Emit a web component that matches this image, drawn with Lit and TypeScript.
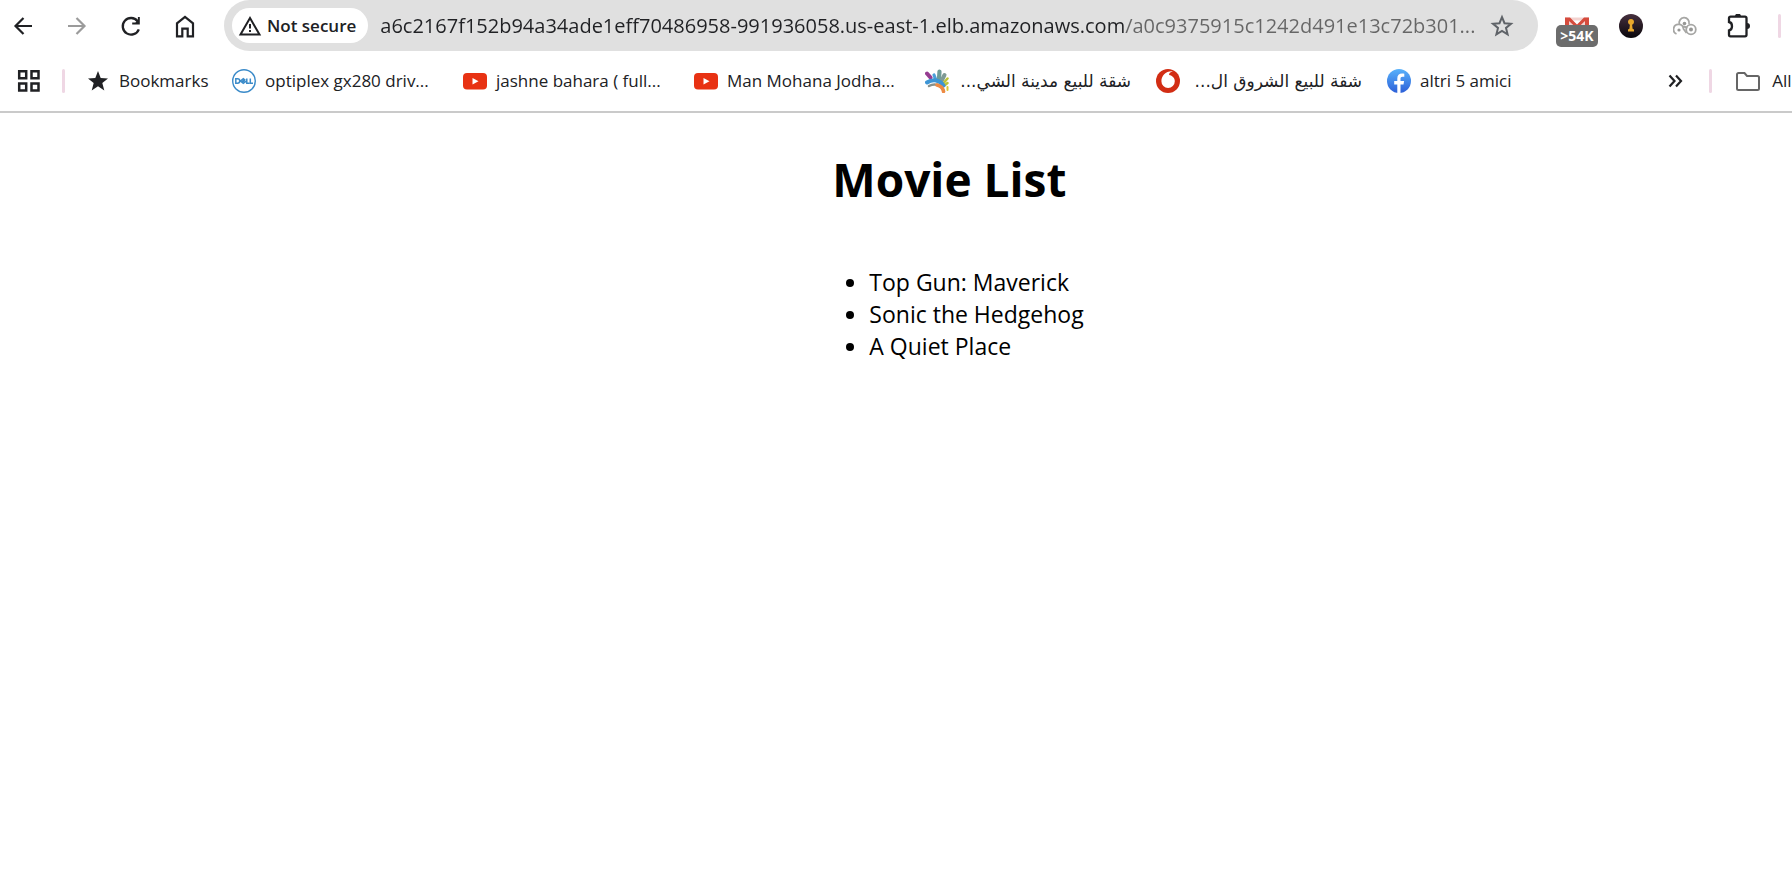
import { LitElement, html, css, svg } from "lit";
import { customElement } from "lit/decorators.js";

const line = (d: string, width = 2) =>
  svg`<path d=${d} fill="none" stroke="currentColor" stroke-width=${width} />`;

const icon = (content: unknown) =>
  html`<svg class="icon" viewBox="0 0 24 24" aria-hidden="true">${content}</svg>`;

const icons = {
  back: icon(line("M21 12H4.500M12.500 4L4.500 12l8 8", 2.2)),
  forward: icon(line("M3 12h16.500M11.500 4l8 8-8 8", 2.2)),
  reload: icon(svg`${line("M19.800 15.300A8.300 8.300 0 1 1 18.600 7.200", 2.3)}<path d="M20.800 3v7.600h-7.600v-2h3.200L18.900 6V3z" fill="currentColor"/>`),
  home: icon(line("M4 22.300V9.300L12 3l8 6.300v13h-5.300v-7.600H9.300v7.600z", 2.2)),
  warning: icon(svg`${line("M12 4L21.500 20.500h-19z", 2)}<path d="M11 10h2v4.500h-2zM11 16h2v2h-2z" fill="currentColor"/>`),
  star: icon(line("M12 3.200l2.500 6 6.500.500-5 4.200 1.600 6.400-5.600-3.400-5.600 3.400L8 13.900 3 9.700l6.500-.500z", 2)),
  gmail: icon(svg`<path d="M0 3.500h24V21H0z" fill="#f3d3d0"/><path d="M5 6.500h14L12 12z" fill="#fff"/><path d="M0 21V3.500h5l7 7 7-7h5V21h-4V7l-8 7.500L4 7v14z" fill="#d54b3d"/>`),
  lock: icon(svg`<defs><linearGradient id="night" x2="0" y2="1"><stop stop-color="#46303e"/><stop offset="1" stop-color="#09060b"/></linearGradient></defs><circle cx="12" cy="12" r="12" fill="url(#night)"/><path d="M9 17.500v-2l1.400-.800.500-4A3 3 0 1 1 13.100 10.700l.5 4 1.400.8v2z" fill="#e9a82c"/>`),
  rings: icon(svg`<g fill="none" stroke="#a6a6a4" stroke-width="1.800"><path d="M6.500 10.500a5 5 0 1 1 9.500-.500"/><path d="M3.500 20A5 5 0 1 1 10.500 15l3 4"/><circle cx="18" cy="15.500" r="4.800"/><path d="M10 12.500l4.500 1"/></g><g fill="#979795"><circle cx="11.500" cy="9.500" r="1.800"/><circle cx="6" cy="16" r="1.600"/><circle cx="18" cy="15.500" r="2"/></g>`),
  puzzle: icon(svg`${line("M3.500 2.700H18a1.500 1.500 0 0 1 1.500 1.500v16.600a1.500 1.500 0 0 1-1.500 1.500H3.500A1.500 1.500 0 0 1 2 20.800v-4.300c4-.500 4-8 0-8.500V4.200a1.500 1.500 0 0 1 1.500-1.500z", 2.3)}<path d="M8 2.500a3 3 0 0 1 6 0zM20 9a3 3 0 0 1 0 6z" fill="currentColor"/>`),
  apps: icon(line("M2.200 2.200h7v7h-7zM14.500 2.200h7v7h-7zM2.200 14.500h7v7h-7zM14.500 14.500h7v7h-7z", 2.5)),
  solidStar: icon(svg`<path d="M12 2l2.700 7 7.300.500-5.700 4.600 2 7.300L12 17.300 5.700 21.400l2-7.300L2 9.500 9.300 9z" fill="currentColor"/>`),
  dell: icon(svg`<circle cx="12" cy="12" r="11.300" fill="none" stroke="#3b8bc9" stroke-width="1.400"/><path d="M3.800 9.800v4.400h1.700c3 0 3-4.400 0-4.400zM8.300 12l3-2.200 1.300 1-2.400 1.700.5.400 2.400-1.700M8.300 12l3 2.300 3.200-2.300M14.800 9.600v4.600h2.600M18.300 9.600v4.600H21" fill="none" stroke="#3b8bc9" stroke-width="1.500"/>`),
  video: icon(svg`<rect y="4" width="24" height="16.500" rx="4" fill="#e83213"/><path d="M9.500 9v6.400l6-3.200z" fill="#fff"/>`),
  fan: icon(svg`<g fill="none" stroke-linecap="round"><path d="M2 4.500l3.500 4" stroke="#963c91" stroke-width="4"/><path d="M9 6l1.500 4" stroke="#4b9fd8" stroke-width="3.200"/><path d="M14.500 2.500l-.500 7" stroke="#6e9c98" stroke-width="4.200"/><path d="M19.500 6l-2.500 5" stroke="#7f9a95" stroke-width="4"/><path d="M22.500 9.500l-3.500 4M22.500 14l-2.500 2" stroke="#bdc436" stroke-width="2.500"/><path d="M22.500 18v3" stroke="#ddc936" stroke-width="2"/><path d="M2 13.500c6-4 13-2.500 16.500 3" stroke="#3d95d5" stroke-width="4"/><path d="M4 17c6-3.500 12-1 15 5" stroke="#87908b" stroke-width="2.500"/><path d="M12 16c4 1 6 3 6.500 6.500" stroke="#ed8a43" stroke-width="3.500"/></g>`),
  drop: icon(svg`<circle cx="12" cy="12" r="12" fill="#d22d14"/><path d="M17 2.200c-3 .800-4 2-3.900 3.700 3.500.700 5.700 3 5.700 6.300a6.700 6.700 0 0 1-13.400 0C5.400 6.500 10 1.500 17 2.200z" fill="#fff"/>`),
  social: icon(svg`<defs><linearGradient id="sky" x2="0" y2="1"><stop stop-color="#58b2fb"/><stop offset="1" stop-color="#2c5fd8"/></linearGradient></defs><circle cx="12" cy="12" r="12" fill="url(#sky)"/><path d="M10.300 24v-8.500H7.200v-3.400h3.100V9.500c0-3.300 1.800-4.900 4.700-4.900.9 0 1.700.1 2.300.2v2.900h-1.700c-1.600 0-2.100.8-2.100 2v2.400h3.600l-.6 3.400h-3V24z" fill="#fff"/>`),
  more: icon(line("M5.500 6.500l5 5.500-5 5.500M12 6.500l5 5.500-5 5.500", 2.2)),
  folder: icon(line("M2.500 4H8.500l2.500 3h10.500a1.500 1.500 0 0 1 1.500 1.500v11a1.500 1.500 0 0 1-1.500 1.500h-19A1.500 1.500 0 0 1 1 19.500v-14A1.500 1.500 0 0 1 2.500 4z", 2)),
};

const bookmarks = [
  { mark: icons.solidStar, label: "Bookmarks" },
  { mark: icons.dell, label: "optiplex gx280 driv..." },
  { mark: icons.video, label: "jashne bahara ( full..." },
  { mark: icons.video, label: "Man Mohana Jodha..." },
  { mark: icons.fan, label: "شقة للبيع مدينة الشي...", rtl: true },
  { mark: icons.drop, label: "شقة للبيع الشروق ال...", rtl: true },
  { mark: icons.social, label: "altri 5 amici" },
];

const movies = ["Top Gun: Maverick", "Sonic the Hedgehog", "A Quiet Place"];

@customElement("browser-toolbar")
export class BrowserToolbar extends LitElement {
  static styles = css`
    :host {
      display: flex;
      align-items: center;
      height: 51px;
      padding: 0 11px;
      color: #202124;
    }
    button {
      display: block;
      padding: 0;
      border: 0;
      background: none;
      color: inherit;
      font: inherit;
    }
    .icon {
      display: block;
      width: 24px;
      height: 24px;
    }
    .group {
      display: flex;
      align-items: center;
      gap: 30px;
    }
    .muted {
      color: #9b9b9b;
    }
    .omnibox {
      flex: 1;
      min-width: 0;
      box-sizing: border-box;
      height: 51px;
      margin: 0 27px;
      padding: 0 24px 0 8px;
      display: flex;
      align-items: center;
      gap: 12px;
      border-radius: 26px;
      background: #e0e0e0;
    }
    .chip {
      display: flex;
      align-items: center;
      gap: 5px;
      height: 35px;
      padding: 0 12px 0 6px;
      border-radius: 18px;
      background: #fff;
      font-size: 17px;
      font-weight: 600;
      white-space: nowrap;
    }
    .url {
      flex: 1;
      min-width: 0;
      padding: 0;
      border: 0;
      outline: 0;
      font: inherit;
      font-size: 20px;
      color: transparent;
      background: linear-gradient(90deg, #202124 745px, #666 745px);
      -webkit-background-clip: text;
      background-clip: text;
    }
    .star {
      color: #5f6368;
    }
    .mail {
      position: relative;
    }
    .badge {
      position: absolute;
      left: -9px;
      top: 11px;
      width: 42px;
      height: 22px;
      border-radius: 5px;
      background: #6c6c6c;
      color: #fff;
      font-size: 14px;
      font-weight: 700;
      line-height: 22px;
      text-align: center;
    }
    .rule {
      width: 3px;
      height: 24px;
      border-radius: 2px;
      background: #efd7e4;
    }
    .edge {
      padding-left: 27px;
    }
  `;

  render() {
    return html`
      <nav class="group" aria-label="Navigation">
        <button aria-label="Back">${icons.back}</button>
        <button class="muted" aria-label="Forward">${icons.forward}</button>
        <button aria-label="Reload">${icons.reload}</button>
        <button aria-label="Home">${icons.home}</button>
      </nav>
      <div class="omnibox">
        <button class="chip">${icons.warning}Not secure</button>
        <input
          class="url"
          aria-label="Address"
          spellcheck="false"
          value="a6c2167f152b94a34ade1eff70486958-991936058.us-east-1.elb.amazonaws.com/a0c9375915c1242d491e13c72b301..."
        />
        <button class="star" aria-label="Bookmark this page">${icons.star}</button>
      </div>
      <div class="group">
        <button class="mail" aria-label="Mail">${icons.gmail}<span class="badge">&gt;54K</span></button>
        <button aria-label="Password lock">${icons.lock}</button>
        <button aria-label="Rings">${icons.rings}</button>
        <button aria-label="Extensions">${icons.puzzle}</button>
      </div>
      <div class="edge"><div class="rule"></div></div>
    `;
  }
}

@customElement("bookmarks-bar")
export class BookmarksBar extends LitElement {
  static styles = css`
    :host {
      display: flex;
      align-items: center;
      height: 60px;
      padding-left: 17px;
      border-bottom: 2px solid #cacaca;
      color: #202124;
      font-size: 17px;
      line-height: 24px;
    }
    button {
      display: flex;
      align-items: center;
      gap: 12px;
      padding: 0;
      border: 0;
      background: none;
      color: inherit;
      font: inherit;
    }
    .icon {
      display: block;
      flex: none;
      width: 24px;
      height: 24px;
    }
    .rule {
      flex: none;
      width: 3px;
      height: 24px;
      margin: 0 21px;
      border-radius: 2px;
      background: #efd7e4;
    }
    .links {
      flex: 1;
      min-width: 0;
      display: grid;
      grid-template-columns: 121px repeat(5, 206px) auto;
      justify-content: start;
      gap: 25px;
      overflow: hidden;
    }
    .link {
      display: flex;
      align-items: center;
      gap: 9px;
      color: inherit;
      text-decoration: none;
      white-space: nowrap;
    }
    .label {
      flex: 1;
    }
    .rtl {
      font-family: "DejaVu Sans", "Open Sans", sans-serif;
    }
    .folder {
      padding-left: 3px;
      color: #666;
    }
    .name {
      width: 20px;
      color: #202124;
      white-space: nowrap;
    }
  `;

  render() {
    return html`
      <button aria-label="Apps">${icons.apps}</button>
      <span class="rule"></span>
      <nav class="links" aria-label="Bookmarks">
        ${bookmarks.map(
          (b) => html`<a class="link" href="#"
            >${b.mark}<span class=${b.rtl ? "label rtl" : "label"} dir=${b.rtl ? "rtl" : "ltr"}>${b.label}</span></a
          >`
        )}
      </nav>
      <button aria-label="More bookmarks">${icons.more}</button>
      <span class="rule"></span>
      <button class="folder">${icons.folder}<span class="name">All</span></button>
    `;
  }
}

@customElement("app-root")
export class AppRoot extends LitElement {
  static styles = css`
    :host {
      display: block;
      min-height: 100vh;
      overflow: hidden;
      background: #fff;
      color: #000;
      font-family: "Open Sans", "Noto Sans", sans-serif;
    }
    .page {
      width: fit-content;
      margin: 0 auto;
      padding: 34px 0 0 124px;
    }
    .title {
      margin: 0;
      font-size: 46px;
      line-height: 64px;
      font-weight: 700;
    }
    .movies {
      margin: 55px 0 0;
      padding-left: 37px;
      font-size: 23px;
      line-height: 32px;
    }
  `;

  render() {
    return html`
      <browser-toolbar></browser-toolbar>
      <bookmarks-bar></bookmarks-bar>
      <main class="page">
        <h1 class="title">Movie List</h1>
        <ul class="movies">
          ${movies.map((m) => html`<li>${m}</li>`)}
        </ul>
      </main>
    `;
  }
}
